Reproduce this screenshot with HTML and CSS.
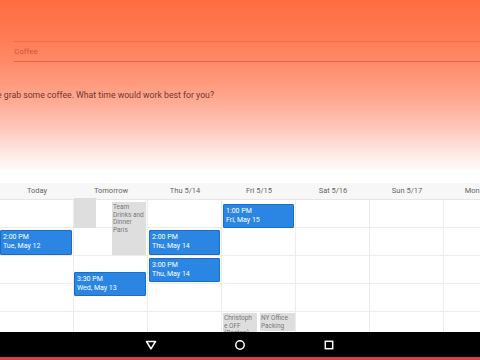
FILE: index.html
```html
<!DOCTYPE html>
<html lang="en">
<head>
    <meta charset="UTF-8">
    <title>Coffee - Find a time</title>
    <link rel="stylesheet" href="styles.css">
</head>
<body>

    <div id="compose">
        <div class="subject">Coffee</div>
        <div class="message">e grab some coffee. What time would work best for you?</div>
    </div>

    <div id="calendar">
        <div class="day-heads">
            <div class="day-head">Today</div>
            <div class="day-head">Tomorrow</div>
            <div class="day-head">Thu 5/14</div>
            <div class="day-head">Fri 5/15</div>
            <div class="day-head">Sat 5/16</div>
            <div class="day-head">Sun 5/17</div>
            <div class="day-head">Mon 5/18</div>
        </div>

        <div class="days">
            <!-- today -->
            <div class="day">
                <div class="hour"></div><div class="hour"></div><div class="hour"></div><div class="hour"></div><div class="hour"></div>
                <div class="event slot" style="top: 30px; height: 25px; left: 0; width: 72px;">2:00 PM<br>Tue, May 12</div>
            </div>
            <!-- tomorrow -->
            <div class="day">
                <div class="hour"></div><div class="hour"></div><div class="hour"></div><div class="hour"></div><div class="hour"></div>
                <div class="event busy" style="top: -2px; height: 30px; left: 0; width: 22px;"></div>
                <div class="event busy" style="top: 2px; height: 53px; left: 38px; width: 34px;">Team Drinks and Dinner Paris</div>
                <div class="event slot" style="top: 72px; height: 24px; left: 0; width: 72px;">3:30 PM<br>Wed, May 13</div>
            </div>
            <!-- thu -->
            <div class="day">
                <div class="hour"></div><div class="hour"></div><div class="hour"></div><div class="hour"></div><div class="hour"></div>
                <div class="event slot" style="top: 30px; height: 25px; left: 1px; width: 71px;">2:00 PM<br>Thu, May 14</div>
                <div class="event slot" style="top: 58px; height: 24px; left: 1px; width: 71px;">3:00 PM<br>Thu, May 14</div>
            </div>
            <!-- fri -->
            <div class="day">
                <div class="hour"></div><div class="hour"></div><div class="hour"></div><div class="hour"></div><div class="hour"></div>
                <div class="event slot" style="top: 4px; height: 24px; left: 1px; width: 71px;">1:00 PM<br>Fri, May 15</div>
                <div class="event busy" style="top: 113px; height: 30px; left: 1px; width: 34px;">Christoph e OFF (Boston)</div>
                <div class="event busy" style="top: 113px; height: 18px; left: 38px; width: 35px;">NY Office Packing</div>
            </div>
            <div class="day">
                <div class="hour"></div><div class="hour"></div><div class="hour"></div><div class="hour"></div><div class="hour"></div>
            </div>
            <div class="day">
                <div class="hour"></div><div class="hour"></div><div class="hour"></div><div class="hour"></div><div class="hour"></div>
            </div>
            <div class="day">
                <div class="hour"></div><div class="hour"></div><div class="hour"></div><div class="hour"></div><div class="hour"></div>
            </div>
        </div>
    </div>

    <div id="navbar">
        <svg width="12" height="10" viewBox="0 0 12 10"><path d="M1.5 1.5 L10.5 1.5 L6 8.8 Z" fill="none" stroke="#fff" stroke-width="1.5" stroke-linejoin="round"/></svg>
        <svg width="12" height="12" viewBox="0 0 12 12"><circle cx="6" cy="6" r="4.2" fill="none" stroke="#fff" stroke-width="1.5"/></svg>
        <svg width="12" height="12" viewBox="0 0 12 12"><rect x="2.3" y="2.3" width="7.4" height="7.4" fill="none" stroke="#fff" stroke-width="1.5"/></svg>
    </div>

</body>
</html>
```

FILE: styles.css
```css
body {
    margin: 0;
    width: 480px;
    height: 360px;
    overflow: hidden;
    font-family: Roboto, "Liberation Sans", sans-serif;
    background-color: #fff;
}
#compose {
    height: 183px;
    padding-top: 41px;
    box-sizing: border-box;
    background: linear-gradient(#ff6c40 0px, #ff7a52 35px, #ff8c6a 65px, #ffa48a 95px, #ffc3b6 125px, #ffe4de 150px, #fff 172px);
}
.subject {
    margin-left: 14px;
    height: 19px;
    line-height: 19px;
    border-top: 1px solid rgba(205, 80, 55, 0.35);
    border-bottom: 1px solid rgba(200, 70, 50, 0.55);
    font-size: 8px;
    color: rgba(195, 75, 55, 0.85);
}
.message {
    margin-top: 27px;
    margin-left: -3px;
    font-size: 8.7px;
    line-height: 12px;
    color: #6e3a30;
    white-space: nowrap;
}
#calendar {
    height: 149px;
    overflow: hidden;
}
.day-heads {
    display: flex;
    height: 16px;
    background-color: #f7f7f7;
    border-bottom: 1px solid #e6e6e6;
}
.day-head {
    flex: 0 0 74px;
    text-align: center;
    font-size: 7.5px;
    line-height: 16px;
    color: #666;
}
.days {
    display: flex;
}
.day {
    position: relative;
    flex: 0 0 74px;
    box-sizing: border-box;
    border-right: 1px solid #ececec;
}
.hour {
    height: 28px;
    box-sizing: border-box;
    border-bottom: 1px solid #ececec;
}
.event {
    position: absolute;
    box-sizing: border-box;
    font-size: 7px;
    line-height: 8.5px;
    padding: 2px 2px;
    overflow: hidden;
}
.slot {
    background-color: #2a86e2;
    border: 1px solid #1a6cc4;
    border-radius: 1px;
    color: #fff;
}
.busy {
    background-color: #dedede;
    color: #7a7a7a;
    font-size: 6.5px;
    line-height: 7.5px;
    padding: 2px 1px;
}
#navbar {
    height: 25px;
    background-color: #000;
    border-bottom: 3px solid #d84040;
    display: flex;
    align-items: center;
    justify-content: center;
    gap: 77px;
}
```
